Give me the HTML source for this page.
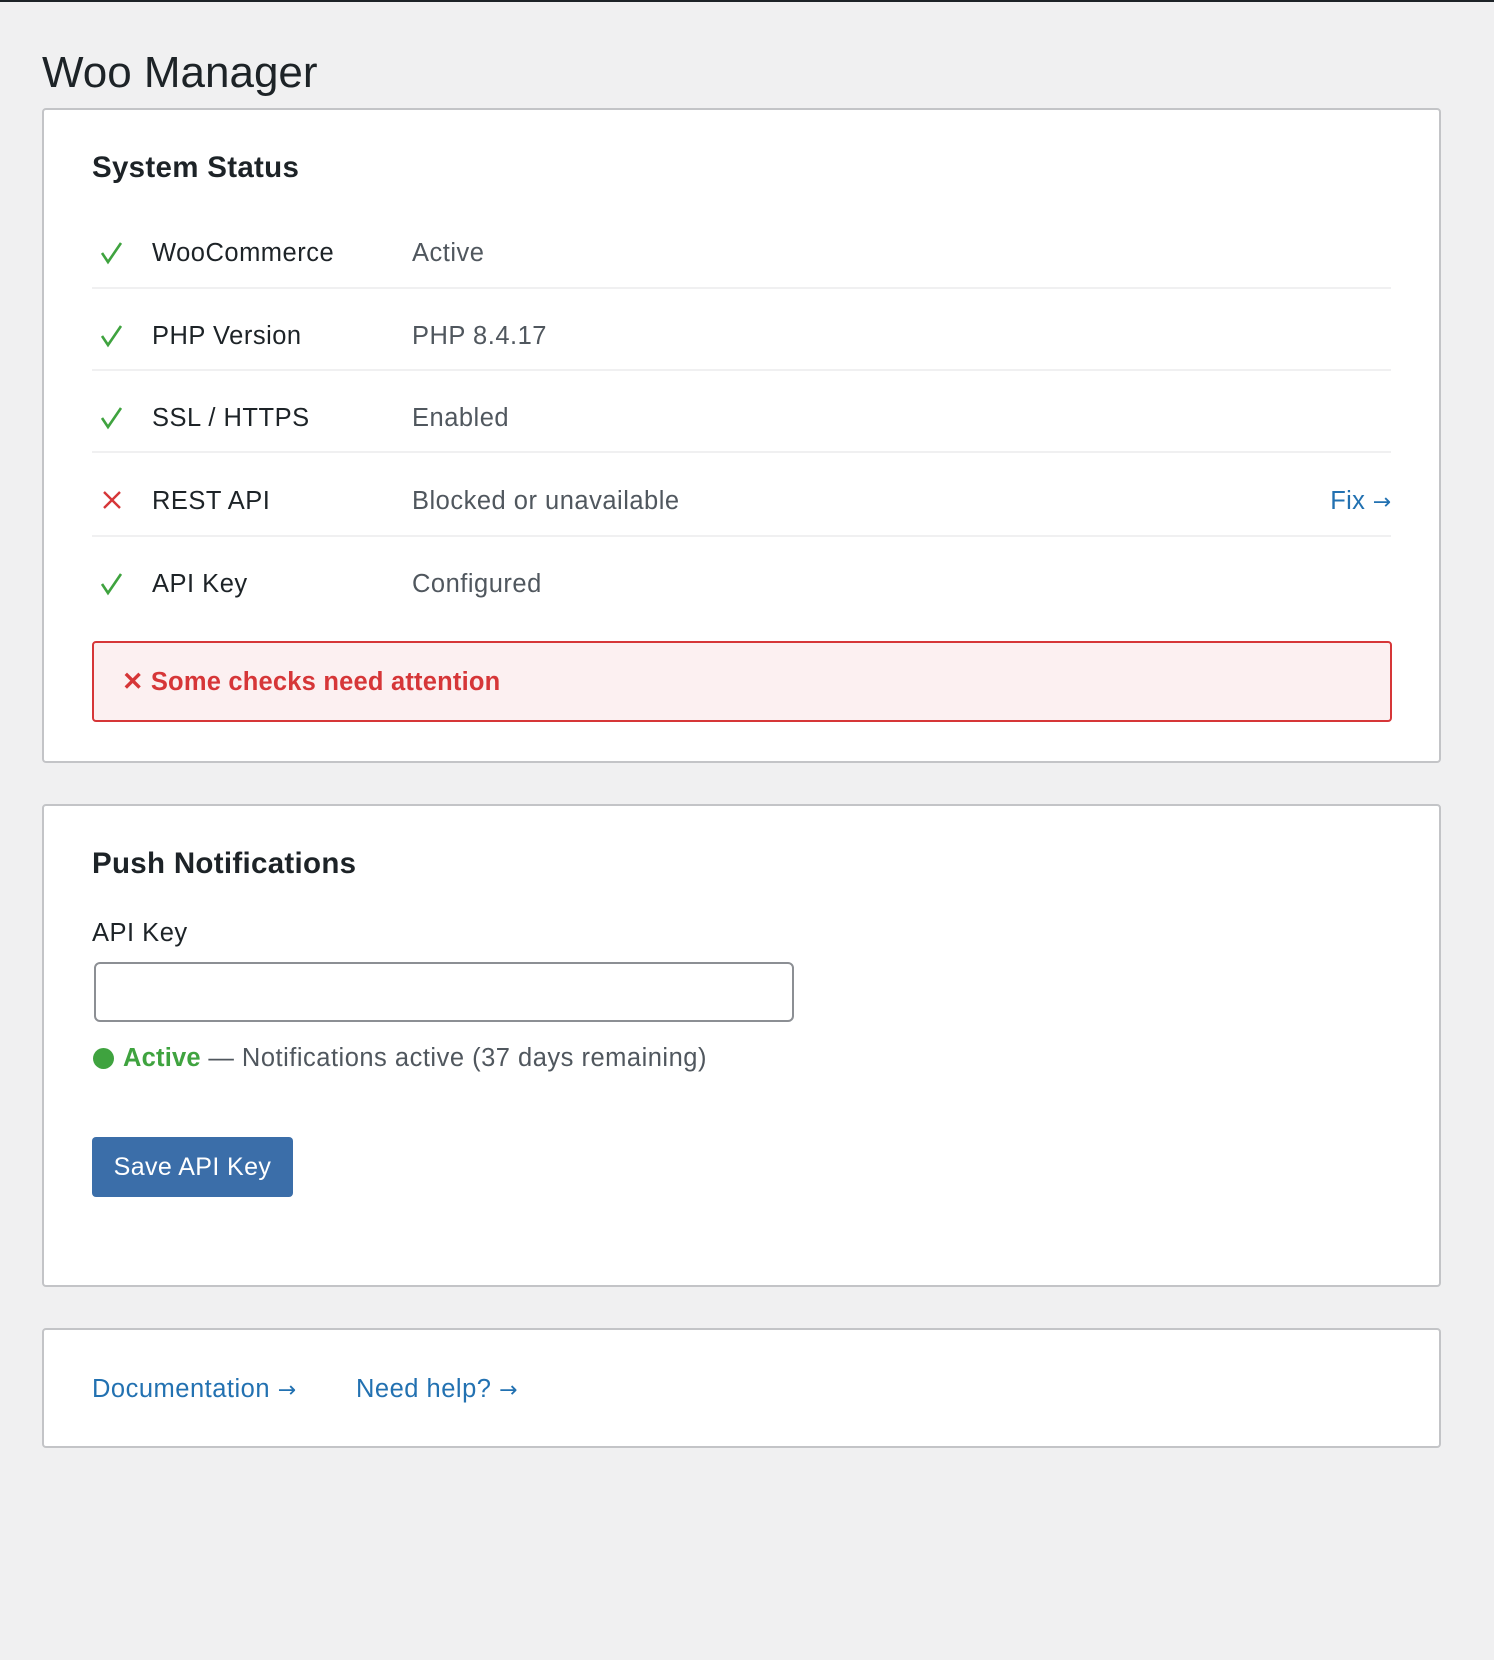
<!DOCTYPE html>
<html><head><meta charset="utf-8"><style>
*{box-sizing:border-box;margin:0;padding:0}
body{width:1494px;height:1660px;background:#f0f0f1;font-family:"Liberation Sans",Arial,sans-serif;position:relative;overflow:hidden;color:#1d2327}
.topbar{position:absolute;left:0;top:0;width:1494px;height:2px;background:#1d2327}
.abs{position:absolute;white-space:nowrap}
.card{position:absolute;left:42px;width:1399px;background:#fff;border:2px solid #c3c4c7;border-radius:4px}
.t{font-size:25.5px;line-height:30px;letter-spacing:0.5px}
.sep{position:absolute;left:92px;width:1299px;height:2px;background:#f0f0f1}
.lab{left:152px;color:#1d2327}
.val{left:412px;color:#50575e}
a{color:#2271b1;text-decoration:none}
.ar{font-family:"DejaVu Sans",sans-serif;font-size:22px;letter-spacing:0}
h2{font-size:29.5px;line-height:36px;font-weight:bold;letter-spacing:0.3px}
</style></head><body>
<div class="topbar"></div>
<div class="abs" style="left:42px;top:45px;font-size:44px;line-height:56px;color:#1d2327">Woo Manager</div>

<div class="card" style="top:108px;height:655px"></div>
<h2 class="abs" style="left:92px;top:150px">System Status</h2>

<svg class="abs" style="left:100px;top:240px" width="24" height="26" viewBox="0 0 24 26"><path d="M2 13 L8 22 L21 3" fill="none" stroke="#3fa33f" stroke-width="2.6"/></svg>
<div class="abs t lab" style="top:238px">WooCommerce</div><div class="abs t val" style="top:238px">Active</div>
<div class="sep" style="top:287px"></div>
<svg class="abs" style="left:100px;top:323px" width="24" height="26" viewBox="0 0 24 26"><path d="M2 13 L8 22 L21 3" fill="none" stroke="#3fa33f" stroke-width="2.6"/></svg>
<div class="abs t lab" style="top:321px">PHP Version</div><div class="abs t val" style="top:321px">PHP 8.4.17</div>
<div class="sep" style="top:369px"></div>
<svg class="abs" style="left:100px;top:405px" width="24" height="26" viewBox="0 0 24 26"><path d="M2 13 L8 22 L21 3" fill="none" stroke="#3fa33f" stroke-width="2.6"/></svg>
<div class="abs t lab" style="top:403px">SSL / HTTPS</div><div class="abs t val" style="top:403px">Enabled</div>
<div class="sep" style="top:451px"></div>
<svg class="abs" style="left:102px;top:490px" width="20" height="20" viewBox="0 0 20 20"><path d="M2 2 L18 18 M18 2 L2 18" fill="none" stroke="#d63638" stroke-width="2.4"/></svg>
<div class="abs t lab" style="top:486px">REST API</div><div class="abs t val" style="top:486px">Blocked or unavailable</div>
<div class="abs t" style="right:103px;top:486px;letter-spacing:0.3px"><a>Fix <span class="ar">→</span></a></div>
<div class="sep" style="top:535px"></div>
<svg class="abs" style="left:100px;top:571px" width="24" height="26" viewBox="0 0 24 26"><path d="M2 13 L8 22 L21 3" fill="none" stroke="#3fa33f" stroke-width="2.6"/></svg>
<div class="abs t lab" style="top:569px">API Key</div><div class="abs t val" style="top:569px">Configured</div>

<div class="abs" style="left:92px;top:641px;width:1300px;height:81px;background:#fcf0f1;border:2px solid #d63638;border-radius:4px"></div>
<div class="abs t" style="left:122px;top:667px;color:#d63638;font-weight:bold;letter-spacing:0.2px">✕ Some checks need attention</div>

<div class="card" style="top:804px;height:483px"></div>
<h2 class="abs" style="left:92px;top:846px">Push Notifications</h2>
<div class="abs t" style="left:92px;top:918px;color:#1d2327">API Key</div>
<div class="abs" style="left:94px;top:962px;width:700px;height:60px;border:2px solid #8c8f94;border-radius:6px;background:#fff"></div>
<div class="abs" style="left:93px;top:1048px;width:21px;height:21px;border-radius:50%;background:#3fa33f"></div>
<div class="abs t" style="left:123px;top:1043px;color:#50575e"><b style="color:#3fa33f;letter-spacing:0.2px">Active</b> — Notifications active (37 days remaining)</div>
<div class="abs" style="left:92px;top:1137px;width:201px;height:60px;background:#3b6ea9;border-radius:4px;color:#fff;font-size:25px;line-height:60px;text-align:center;letter-spacing:0.4px">Save API Key</div>

<div class="card" style="top:1328px;height:120px"></div>
<div class="abs t" style="left:92px;top:1374px"><a>Documentation <span class="ar">→</span></a></div>
<div class="abs t" style="left:356px;top:1374px"><a>Need help? <span class="ar">→</span></a></div>
</body></html>
